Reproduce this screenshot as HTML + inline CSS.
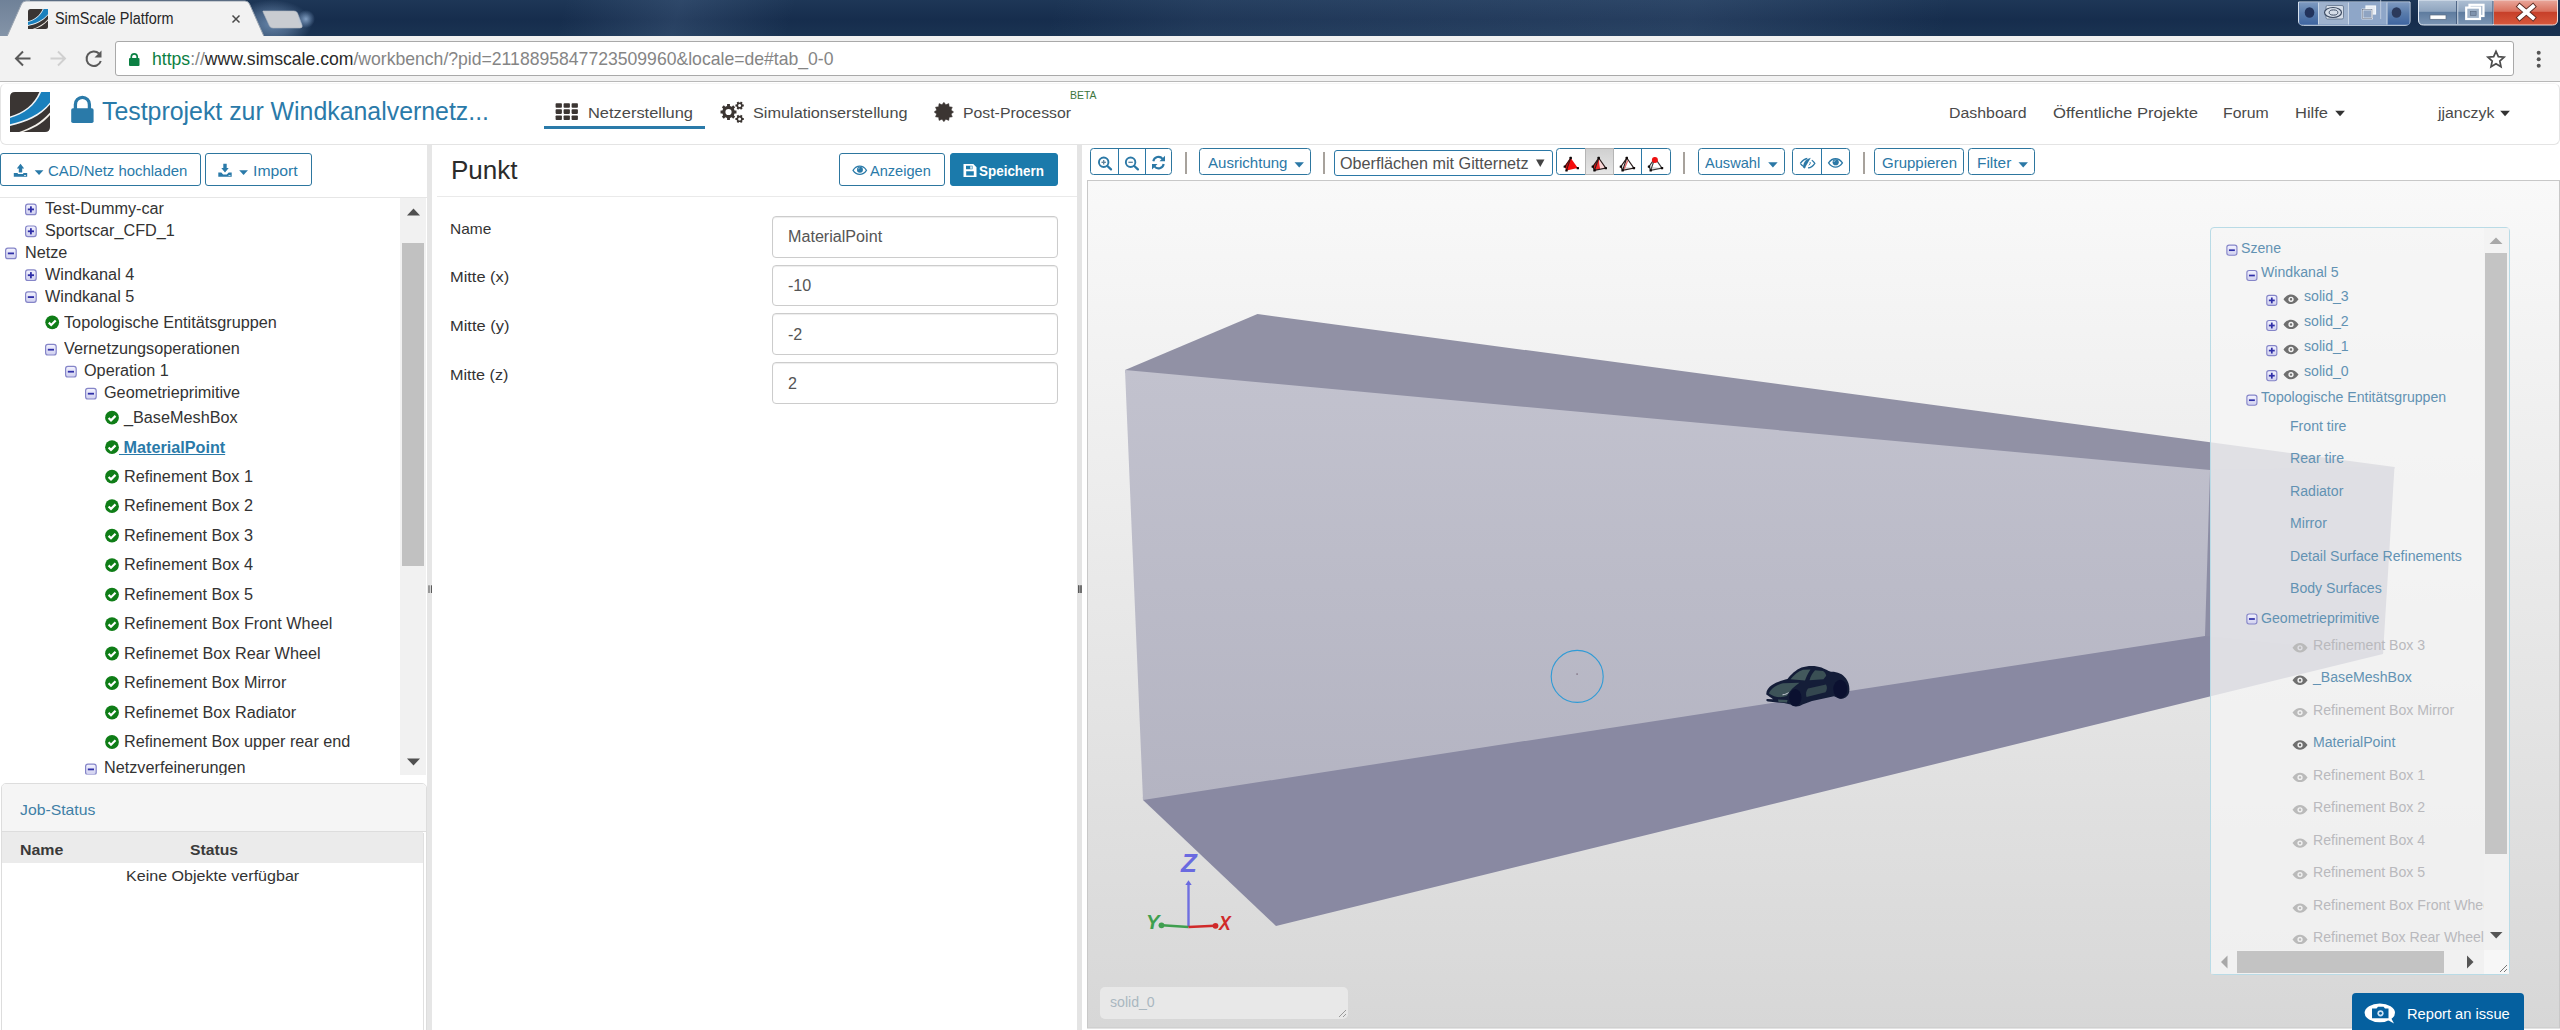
<!DOCTYPE html>
<html lang="de">
<head>
<meta charset="utf-8">
<title>SimScale Platform</title>
<style>
*{box-sizing:border-box;margin:0;padding:0}
html,body{width:2560px;height:1030px;overflow:hidden;background:#fff}
body{position:relative;font-family:"Liberation Sans","DejaVu Sans",sans-serif;color:#333}
.a{position:absolute}
.t{position:absolute;white-space:nowrap;line-height:1}
svg{position:absolute;overflow:visible}
/* ---------- browser chrome ---------- */
#titlebar{left:0;top:0;width:2560px;height:36px;background:
 linear-gradient(105deg,rgba(130,160,200,0) 0 22%,rgba(130,160,200,.17) 26.5%,rgba(130,160,200,0) 31% 41%,rgba(130,160,200,.09) 47%,rgba(130,160,200,.15) 66%,rgba(130,160,200,0) 76%),
 linear-gradient(#1e3757,#162d4d 55%,#1a3352)}
#toolbar{left:0;top:36px;width:2560px;height:46px;background:#f2f2f2;border-bottom:1px solid #b8b8b8}
#omni{left:115px;top:41px;width:2399px;height:35px;background:#fff;border:1px solid #a9a9a9;border-radius:3px}
/* ---------- app ---------- */
#app{left:0;top:83px;width:2560px;height:947px;background:#fff}
#hdr{left:0;top:82.5px;width:2559.5px;height:62.5px;background:#fff;border:1px solid #e4e4e4;border-top-color:#f6f6f6;border-radius:6px}
.btn{position:absolute;border:1px solid #2d769f;border-radius:3px;background:#fff;height:33px}
.vb{position:absolute;border:1px solid #2d769f;border-radius:3.5px;background:#fff;top:148px;height:27px}
.sep{position:absolute;top:152px;width:2px;height:22px;background:#a7a29c}
.inp{position:absolute;left:772px;width:286px;height:41.7px;border:1px solid #ccc;border-radius:4px;background:#fff;box-shadow:inset 0 1px 1px rgba(0,0,0,.075)}
</style>
</head>
<body>
<svg width="0" height="0" style="left:0;top:0"><defs>
<g id="logo"><path d="M5 0 H40 V35 Q40 40 35 40 H0 V5 Q0 0 5 0 Z" fill="#3a3533"/>
<path d="M40 0 L40 12.6 C30 24.6 16 30.6 0 34 L0 24.4 C14 20.6 24 12.6 29.4 0 Z" fill="#eef4f8"/>
<path d="M40 0 L40 10.6 C30 22.6 16 28.8 0 32.2 L0 26 C14 22.2 25 14 31.3 0 Z" fill="#1a80bd"/>
<path d="M40 23 C32 32.4 22 37.2 13.2 40 L9.2 40 C20 36.4 31 30.8 40 20.6 Z" fill="#f3f0ea"/>
</g></defs></svg>
<!-- ================= BROWSER CHROME ================= -->
<div id="titlebar" class="a"></div>
<div class="a" style="left:0;top:0;width:30px;height:36px;background:linear-gradient(#6f8198,#8494a8)"></div>
<svg style="left:0;top:0" width="2560" height="37" viewBox="0 0 2560 37">
 <defs><linearGradient id="gcl" x1="0" y1="0" x2="0" y2="1"><stop offset="0" stop-color="#e9a79b"/><stop offset=".45" stop-color="#d9715e"/><stop offset=".5" stop-color="#c7402a"/><stop offset="1" stop-color="#d8583c"/></linearGradient>
 <linearGradient id="gmm" x1="0" y1="0" x2="0" y2="1"><stop offset="0" stop-color="#aebfd3"/><stop offset=".45" stop-color="#8fa5bf"/><stop offset=".5" stop-color="#5f7c9f"/><stop offset="1" stop-color="#7b95b4"/></linearGradient>
 <radialGradient id="glow2"><stop offset="0" stop-color="#86a7cc" stop-opacity=".7"/><stop offset=".5" stop-color="#7f9fc4" stop-opacity=".45"/><stop offset="1" stop-color="#7f9fc4" stop-opacity="0"/></radialGradient>
 <radialGradient id="glow"><stop offset="0" stop-color="#a9c8ec" stop-opacity=".7"/><stop offset="1" stop-color="#9cc0ea" stop-opacity="0"/></radialGradient>
 <linearGradient id="gdk" x1="0" y1="0" x2="0" y2="1"><stop offset="0" stop-color="#7d99c0"/><stop offset=".5" stop-color="#587bab"/><stop offset="1" stop-color="#3f65a0"/></linearGradient>
 <linearGradient id="gov" x1="0" y1="0" x2="0" y2="1"><stop offset="0" stop-color="#8fa3c0"/><stop offset="1" stop-color="#6480a8"/></linearGradient></defs>
 <ellipse cx="272" cy="24" rx="40" ry="24" fill="url(#glow2)"/>
 <!-- active tab -->
 <path d="M7 36.5 L21.5 4 Q23 1 26 1 L245 1 Q248 1 249.5 4 L264 36.5 Z" fill="#f2f2f2" stroke="#9aa4b0" stroke-width="1"/>
 <rect x="0" y="36" width="2560" height="1" fill="#f2f2f2"/>
 <!-- new tab button -->
 <path d="M263 11 L294 11 Q296.5 11 297.5 13 L302 25 Q303 28 300 28 L273 28 Q270.5 28 269.5 26 L263.5 13 Q262.5 11 263 11Z" fill="#c9ccd1" stroke="#aeb5bf" stroke-width=".6"/>
 <circle cx="306" cy="19" r="9" fill="url(#glow)"/>
 <!-- favicon -->
 <g transform="translate(28,9) scale(.5)"><use href="#logo"/></g>
 <!-- tab close -->
 <path d="M232.5 15.5 L239.5 22.5 M239.5 15.5 L232.5 22.5" stroke="#4a4a4a" stroke-width="1.5" fill="none"/>
 <!-- overlay control group -->
 <path d="M2298.5 2 L2298.5 21 Q2298.5 25.3 2303.5 25.3 L2405 25.3 Q2410 25.3 2410 21 L2410 2Z" fill="#5d7fae" stroke="#d5e0ee" stroke-width="1"/>
 <rect x="2299.5" y="2.5" width="19" height="22" fill="url(#gdk)"/><rect x="2387.5" y="2.5" width="22" height="22" fill="url(#gdk)"/>
 <rect x="2319" y="2.5" width="29.5" height="22" fill="#9fb2cd"/><rect x="2349" y="2.5" width="38" height="22" fill="#8ea6c8"/>
 <path d="M2318.5 2.5V24.5M2348.5 2.5V24.5M2387 2.5V24.5" stroke="#c9d6e6" stroke-width="1"/>
 <path d="M2380.7 0V19" stroke="#c9d6e6" stroke-width="1" opacity=".8"/>
 <ellipse cx="2309.5" cy="12.5" rx="4.8" ry="5.3" fill="#22335c"/><ellipse cx="2396.5" cy="12.5" rx="4.8" ry="5.3" fill="#2b3a5c"/>
 <rect x="2326" y="5.5" width="17.5" height="13.5" rx="1.5" fill="#d5dde8" stroke="#5d6e88" stroke-width=".8"/><ellipse cx="2333" cy="12.5" rx="8.5" ry="5" fill="#d5dde8" stroke="#3d4b63" stroke-width="1.2"/><ellipse cx="2333.5" cy="12.5" rx="4.3" ry="2.6" fill="none" stroke="#3d4b63" stroke-width="1"/>
 <rect x="2366" y="6" width="9.5" height="8" fill="#e6ecf4" stroke="#f4f7fb" stroke-width="1.2"/><rect x="2362.5" y="9.5" width="9.5" height="9" fill="#8fa4c2" stroke="#fff" stroke-width="1.6"/><rect x="2362.5" y="9.5" width="9.5" height="9" fill="none" stroke="#44536d" stroke-width=".5"/>
 <!-- min / max / close -->
 <path d="M2418.5 0 L2418.5 20 Q2418.5 25 2423.5 25 L2493.5 25 L2493.5 0Z" fill="url(#gmm)" stroke="#e6edf5" stroke-width="1"/>
 <path d="M2493.5 0 L2493.5 25 L2552.5 25 Q2557.5 25 2557.5 20 L2557.5 0Z" fill="url(#gcl)" stroke="#f3dcd8" stroke-width="1"/>
 <path d="M2457.7 1V24" stroke="#e6edf5" stroke-width="1"/><path d="M2456.7 1V24M2493 1V24" stroke="#3d5578" stroke-width="1"/>
 <rect x="2430" y="15" width="16" height="4.3" fill="#fff" stroke="#5a6a80" stroke-width=".7"/>
 <rect x="2469.5" y="4.8" width="14" height="11.2" fill="#a9bace" stroke="#fff" stroke-width="2.2"/><rect x="2466.2" y="7.6" width="13.8" height="11.4" fill="#9fb2c8" stroke="#fff" stroke-width="2.2"/><rect x="2470.3" y="11.3" width="5.8" height="4.2" fill="#7f93ad" stroke="#5a6a80" stroke-width=".6"/>
 <path d="M2519.7 6.5 L2532.9 17.7 M2532.9 6.5 L2519.7 17.7" stroke="#5b2a22" stroke-width="5.6" stroke-linecap="square"/><path d="M2519.7 6.5 L2532.9 17.7 M2532.9 6.5 L2519.7 17.7" stroke="#fff" stroke-width="3.8" stroke-linecap="square"/>
</svg>

<div id="toolbar" class="a"></div>
<div id="omni" class="a"></div>
<svg style="left:0;top:36" width="2560" height="46" viewBox="0 36 2560 46">
 <!-- back -->
 <path d="M30.5 58.5 H16.5 M23 51.5 L16 58.5 L23 65.5" fill="none" stroke="#5a5a5a" stroke-width="2"/>
 <!-- forward -->
 <path d="M50.5 58.5 H64.5 M58 51.5 L65 58.5 L58 65.5" fill="none" stroke="#d0d0d0" stroke-width="1.9"/>
 <!-- reload -->
 <path d="M99 53.5 A7.3 7.3 0 1 0 100.8 61" fill="none" stroke="#5a5a5a" stroke-width="2"/><path d="M101.5 50.5 V57.5 H94.5 Z" fill="#5a5a5a"/>
 <!-- lock -->
 <rect x="129" y="58" width="10.5" height="8" rx="1" fill="#0b8043"/><path d="M131.3 58.5 V56.3 A3 3 0 0 1 137.2 56.3 V58.5" fill="none" stroke="#0b8043" stroke-width="1.7"/>
 <!-- star -->
 <path d="M2496 51.3 L2498.350 56.6 L2504.1 57.2 L2499.8 61.050 L2501 66.7 L2496 63.8 L2491 66.7 L2492.2 61.050 L2487.9 57.2 L2493.650 56.6 Z" fill="none" stroke="#4d4d4d" stroke-width="1.7" stroke-linejoin="miter"/>
 <!-- menu -->
 <circle cx="2538.7" cy="52.7" r="2" fill="#555"/><circle cx="2538.7" cy="59.2" r="2" fill="#555"/><circle cx="2538.7" cy="65.7" r="2" fill="#555"/>
</svg>


<svg width="0" height="0" style="left:0;top:0"><defs>
<linearGradient id="pmg" x1="0" y1="0" x2="0" y2="1"><stop offset="0" stop-color="#f4f4ff"/><stop offset="1" stop-color="#cfcfee"/></linearGradient>
<g id="minus"><rect x=".6" y=".6" width="10.6" height="10.6" rx="2.3" fill="url(#pmg)" stroke="#8585c8" stroke-width="1.2"/><rect x="2.8" y="5" width="6.2" height="1.8" fill="#3030a8"/></g>
<g id="plus"><rect x=".6" y=".6" width="10.6" height="10.6" rx="2.3" fill="url(#pmg)" stroke="#8585c8" stroke-width="1.2"/><rect x="2.8" y="5" width="6.2" height="1.8" fill="#3030a8"/><rect x="5" y="2.8" width="1.8" height="6.2" fill="#3030a8"/></g>
<g id="chk"><circle cx="7" cy="7" r="6.9" fill="#0f7d17"/><path d="M3.6 7.3 L6 9.7 L10.5 5.2" fill="none" stroke="#fff" stroke-width="2.2"/></g>
<g id="eye"><path d="M.7 5.2 C3 1.8 5.6 .8 8 .8 C10.4 .8 13 1.8 15.3 5.2 C13 8.6 10.4 9.6 8 9.6 C5.6 9.6 3 8.6 .7 5.2 Z" fill="none" stroke="currentColor" stroke-width="1.35"/><circle cx="8.2" cy="4.5" r="3.25" fill="currentColor"/><path d="M6.3 4.2 A2 2 0 0 1 8 2.6" fill="none" stroke="#fff" stroke-width=".7" opacity=".8"/></g>
<g id="eyef"><path fill-rule="evenodd" d="M0 5 C2.6 1.1 5.4 0 8 0 C10.6 0 13.4 1.1 16 5 C13.4 8.9 10.6 10 8 10 C5.4 10 2.6 8.9 0 5 Z M8 2.2 A2.8 2.8 0 1 0 8 7.8 A2.8 2.8 0 1 0 8 2.2 Z M8 3.7 A1.3 1.3 0 1 0 8 6.3 A1.3 1.3 0 1 0 8 3.7 Z"/></g>
<path id="caret" d="M0 0 H9 L4.5 5 Z"/>
</defs></svg>

<span class="t" style="left:55.0px;top:11.1px;font-size:16px;color:#262626;transform:scaleX(0.9005);transform-origin:0 0;">SimScale Platform</span>
<span class="t" style="left:152.0px;top:50.3px;font-size:18.5px;color:#858585;transform:scaleX(0.9511);transform-origin:0 0;"><span style="color:#0b8043">https</span>://<span style="color:#2a2a2a">www.simscale.com</span>/workbench/?pid=2118895847723509960&amp;locale=de#tab_0-0</span>
<div id="app" class="a"></div>
<div id="hdr" class="a"></div>
<span class="t" style="left:102.3px;top:99.4px;font-size:25px;color:#2a7aa9;transform:scaleX(0.9947);transform-origin:0 0;">Testprojekt zur Windkanalvernetz...</span>
<div class="btn" style="left:0;top:153px;width:201px"></div><div class="btn" style="left:205px;top:153px;width:107px"></div>
<span class="t" style="left:48.2px;top:164.1px;font-size:14.7px;color:#2a7aa9;transform:scaleX(1.0155);transform-origin:0 0;">CAD/Netz hochladen</span>
<span class="t" style="left:253.3px;top:164.1px;font-size:14.7px;color:#2a7aa9;transform:scaleX(1.0739);transform-origin:0 0;">Import</span>
<div class="a" style="left:0;top:197px;width:427px;height:1px;background:#e6e6e6"></div>
<div class="a" style="left:0;top:197px;width:400px;height:577.5px;overflow:hidden"><div class="a" style="left:0;top:-197px;width:400px;height:1030px"><span class="t" style="left:44.6px;top:200.9px;font-size:16px;color:#333;transform:scaleX(1.0140);transform-origin:0 0;">Test-Dummy-car</span><span class="t" style="left:44.6px;top:222.8px;font-size:16px;color:#333;transform:scaleX(1.0140);transform-origin:0 0;">Sportscar_CFD_1</span><span class="t" style="left:24.6px;top:244.6px;font-size:16px;color:#333;transform:scaleX(1.0140);transform-origin:0 0;">Netze</span><span class="t" style="left:44.8px;top:266.5px;font-size:16px;color:#333;transform:scaleX(1.0140);transform-origin:0 0;">Windkanal 4</span><span class="t" style="left:44.8px;top:288.5px;font-size:16px;color:#333;transform:scaleX(1.0140);transform-origin:0 0;">Windkanal 5</span><span class="t" style="left:64.0px;top:314.8px;font-size:16px;color:#333;transform:scaleX(1.0140);transform-origin:0 0;">Topologische Entitätsgruppen</span><span class="t" style="left:64.2px;top:340.6px;font-size:16px;color:#333;transform:scaleX(1.0140);transform-origin:0 0;">Vernetzungsoperationen</span><span class="t" style="left:84.4px;top:362.6px;font-size:16px;color:#333;transform:scaleX(1.0140);transform-origin:0 0;">Operation 1</span><span class="t" style="left:104.4px;top:384.6px;font-size:16px;color:#333;transform:scaleX(1.0140);transform-origin:0 0;">Geometrieprimitive</span><span class="t" style="left:124.0px;top:410.0px;font-size:16px;color:#333;transform:scaleX(1.0140);transform-origin:0 0;">_BaseMeshBox</span><span class="t" style="left:119.2px;top:439.5px;font-size:16px;color:#2a7aa9;font-weight:700;transform:scaleX(1.0120);transform-origin:0 0;text-decoration:underline;">&nbsp;MaterialPoint</span><span class="t" style="left:124.0px;top:468.9px;font-size:16px;color:#333;transform:scaleX(1.0140);transform-origin:0 0;">Refinement Box 1</span><span class="t" style="left:124.0px;top:498.4px;font-size:16px;color:#333;transform:scaleX(1.0140);transform-origin:0 0;">Refinement Box 2</span><span class="t" style="left:124.0px;top:527.9px;font-size:16px;color:#333;transform:scaleX(1.0140);transform-origin:0 0;">Refinement Box 3</span><span class="t" style="left:124.0px;top:557.3px;font-size:16px;color:#333;transform:scaleX(1.0140);transform-origin:0 0;">Refinement Box 4</span><span class="t" style="left:124.0px;top:586.8px;font-size:16px;color:#333;transform:scaleX(1.0140);transform-origin:0 0;">Refinement Box 5</span><span class="t" style="left:124.0px;top:616.3px;font-size:16px;color:#333;transform:scaleX(1.0140);transform-origin:0 0;">Refinement Box Front Wheel</span><span class="t" style="left:124.0px;top:645.8px;font-size:16px;color:#333;transform:scaleX(1.0140);transform-origin:0 0;">Refinemet Box Rear Wheel</span><span class="t" style="left:124.0px;top:675.2px;font-size:16px;color:#333;transform:scaleX(1.0140);transform-origin:0 0;">Refinement Box Mirror</span><span class="t" style="left:124.0px;top:704.7px;font-size:16px;color:#333;transform:scaleX(1.0140);transform-origin:0 0;">Refinemet Box Radiator</span><span class="t" style="left:124.0px;top:734.2px;font-size:16px;color:#333;transform:scaleX(1.0140);transform-origin:0 0;">Refinement Box upper rear end</span><span class="t" style="left:104.4px;top:760.4px;font-size:16px;color:#333;transform:scaleX(1.0140);transform-origin:0 0;">Netzverfeinerungen</span></div></div>
<div class="a" style="left:400px;top:198px;width:25.5px;height:577px;background:#f1f1f1"></div>
<div class="a" style="left:402px;top:243px;width:22px;height:323px;background:#c1c1c1"></div>
<div class="a" style="left:1px;top:783px;width:426px;height:260px;border:1px solid #ddd;border-radius:5px;background:#fff"></div>
<div class="a" style="left:2px;top:784px;width:424px;height:48px;background:#f5f5f5;border-bottom:1px solid #ddd;border-radius:4px 4px 0 0"></div>
<span class="t" style="left:20.2px;top:802.7px;font-size:14.6px;color:#3f7fa6;transform:scaleX(1.0793);transform-origin:0 0;">Job-Status</span>
<div class="a" style="left:2px;top:832px;width:421px;height:30.5px;background:#ebebeb"></div>
<div class="a" style="left:422.5px;top:833px;width:1px;height:197px;background:#e0e0e0"></div>
<span class="t" style="left:20.4px;top:841.8px;font-size:15px;color:#3a3a3a;font-weight:700;transform:scaleX(1.0622);transform-origin:0 0;">Name</span>
<span class="t" style="left:190.2px;top:841.8px;font-size:15px;color:#3a3a3a;font-weight:700;transform:scaleX(1.0470);transform-origin:0 0;">Status</span>
<span class="t" style="left:125.6px;top:868.9px;font-size:14.6px;color:#333;transform:scaleX(1.1004);transform-origin:0 0;">Keine Objekte verfügbar</span>
<div class="a" style="left:427px;top:145px;width:5px;height:885px;background:#e6e6e6"></div>
<svg style="left:0;top:0" width="440" height="1030" viewBox="0 0 440 1030"><defs><clipPath id="tclip"><rect x="0" y="84" width="440" height="690.5"/></clipPath></defs><g clip-path="url(#tclip)"><use href="#logo" transform="translate(10,92)"/><rect x="71.2" y="108.3" width="22.4" height="14.8" rx="1.8" fill="#2a7aa9"/><path d="M75.4 109.5 V104.4 A7 7 0 0 1 89.4 104.4 V109.5" fill="none" stroke="#2a7aa9" stroke-width="3.3"/><g fill="#2a7aa9"><path d="M20.5 163.8 L24.2 168.4 H22.2 V172.4 H18.8 V168.4 H16.8 Z"/><path fill-rule="evenodd" d="M13.8 173 H17.8 V174 H23.2 V173 H27.2 V176.8 H13.8 Z M24 175 H26 V175.8 H24 Z"/></g><use href="#caret" transform="translate(34.7,170.2) scale(0.97)" fill="#2a7aa9" color="#2a7aa9"/><g fill="#2a7aa9"><path d="M223.3 163.8 H226.7 V168 H228.7 L225 172.6 L221.3 168 H223.3 Z"/><path fill-rule="evenodd" d="M218.3 172.6 H221.3 L223.2 174.5 H226.8 L228.7 172.6 H231.7 V176.8 H218.3 Z M228.5 175 H230.5 V175.8 H228.5 Z"/></g><use href="#caret" transform="translate(239.2,170.2) scale(0.97)" fill="#2a7aa9" color="#2a7aa9"/><use href="#plus" transform="translate(25,203.5)"/><use href="#plus" transform="translate(25,225.4)"/><use href="#minus" transform="translate(5,247.5)"/><use href="#plus" transform="translate(25,269.3)"/><use href="#minus" transform="translate(25,291.2)"/><use href="#chk" transform="translate(45.2,315.3)"/><use href="#minus" transform="translate(45,343.8)"/><use href="#minus" transform="translate(65,365.8)"/><use href="#minus" transform="translate(85,387.8)"/><use href="#chk" transform="translate(105,410.7)"/><use href="#chk" transform="translate(105,440.2)"/><use href="#chk" transform="translate(105,469.7)"/><use href="#chk" transform="translate(105,499.2)"/><use href="#chk" transform="translate(105,528.6)"/><use href="#chk" transform="translate(105,558.1)"/><use href="#chk" transform="translate(105,587.6)"/><use href="#chk" transform="translate(105,617.1)"/><use href="#chk" transform="translate(105,646.5)"/><use href="#chk" transform="translate(105,676)"/><use href="#chk" transform="translate(105,705.5)"/><use href="#chk" transform="translate(105,735)"/><use href="#minus" transform="translate(85,763.5)"/><path d="M407 215.5 L413.5 208.5 L420 215.5 Z" fill="#505050"/><path d="M407 758.5 L413.5 765.5 L420 758.5 Z" fill="#505050"/><path d="M429 585.3 V593 M431.4 585.3 V593" stroke="#4a4a4a" stroke-width="1"/></g></svg>
<span class="t" style="left:587.5px;top:104.9px;font-size:15.3px;color:#4a4a4a;transform:scaleX(1.0738);transform-origin:0 0;">Netzerstellung</span>
<div class="a" style="left:544px;top:125.5px;width:161px;height:3px;background:#2a7aa9"></div>
<span class="t" style="left:753.0px;top:104.9px;font-size:15.3px;color:#4a4a4a;transform:scaleX(1.0625);transform-origin:0 0;">Simulationserstellung</span>
<span class="t" style="left:963.0px;top:104.9px;font-size:15.3px;color:#4a4a4a;transform:scaleX(1.0329);transform-origin:0 0;">Post-Processor</span>
<span class="t" style="left:1069.5px;top:89.8px;font-size:10.5px;color:#3c763d;transform:scaleX(0.9941);transform-origin:0 0;">BETA</span>
<span class="t" style="left:1949.0px;top:104.9px;font-size:15.3px;color:#4a4a4a;transform:scaleX(1.0382);transform-origin:0 0;">Dashboard</span>
<span class="t" style="left:2052.5px;top:104.9px;font-size:15.3px;color:#4a4a4a;transform:scaleX(1.0884);transform-origin:0 0;">Öffentliche Projekte</span>
<span class="t" style="left:2223.0px;top:104.9px;font-size:15.3px;color:#4a4a4a;transform:scaleX(1.0339);transform-origin:0 0;">Forum</span>
<span class="t" style="left:2295.3px;top:104.9px;font-size:15.3px;color:#4a4a4a;transform:scaleX(1.0781);transform-origin:0 0;">Hilfe</span>
<span class="t" style="left:2437.7px;top:104.9px;font-size:15.3px;color:#4a4a4a;transform:scaleX(1.0348);transform-origin:0 0;">jjanczyk</span>
<span class="t" style="left:450.6px;top:157.0px;font-size:26.5px;color:#2b2b2b;transform:scaleX(0.9828);transform-origin:0 0;">Punkt</span>
<div class="btn" style="left:839px;top:153px;width:106px"></div>
<div class="btn" style="left:950px;top:153px;width:108px;background:#1b7aab;border-color:#1b7aab"></div>
<span class="t" style="left:870.2px;top:163.5px;font-size:14.7px;color:#2a7aa9;transform:scaleX(0.9927);transform-origin:0 0;">Anzeigen</span>
<span class="t" style="left:978.8px;top:163.5px;font-size:14.7px;color:#fff;font-weight:700;transform:scaleX(0.9153);transform-origin:0 0;">Speichern</span>
<div class="a" style="left:437px;top:196px;width:640px;height:1px;background:#eaeaea"></div>
<div class="inp" style="top:216px"></div>
<span class="t" style="left:788.2px;top:229.1px;font-size:16px;color:#555;transform:scaleX(1.0080);transform-origin:0 0;">MaterialPoint</span>
<span class="t" style="left:450.0px;top:220.5px;font-size:15px;color:#333;transform:scaleX(1.0321);transform-origin:0 0;">Name</span>
<div class="inp" style="top:264.5px"></div>
<span class="t" style="left:788.2px;top:278.4px;font-size:16px;color:#555;transform:scaleX(1.0080);transform-origin:0 0;">-10</span>
<span class="t" style="left:450.0px;top:268.6px;font-size:15px;color:#333;transform:scaleX(1.0928);transform-origin:0 0;">Mitte (x)</span>
<div class="inp" style="top:313.3px"></div>
<span class="t" style="left:788.2px;top:327.4px;font-size:16px;color:#555;transform:scaleX(1.0080);transform-origin:0 0;">-2</span>
<span class="t" style="left:450.0px;top:317.5px;font-size:15px;color:#333;transform:scaleX(1.0965);transform-origin:0 0;">Mitte (y)</span>
<div class="inp" style="top:362.2px"></div>
<span class="t" style="left:788.2px;top:376.2px;font-size:16px;color:#555;transform:scaleX(1.0080);transform-origin:0 0;">2</span>
<span class="t" style="left:450.0px;top:366.5px;font-size:15px;color:#333;transform:scaleX(1.0781);transform-origin:0 0;">Mitte (z)</span>
<div class="a" style="left:1077px;top:145px;width:5px;height:885px;background:#e4e4e4"></div>
<svg style="left:0;top:0" width="2560" height="420" viewBox="0 0 2560 420"><rect x="555.6" y="103.2" width="6.3" height="4.6" rx=".8" fill="#3b3532"/><rect x="563.6" y="103.2" width="6.3" height="4.6" rx=".8" fill="#3b3532"/><rect x="571.6" y="103.2" width="6.3" height="4.6" rx=".8" fill="#3b3532"/><rect x="555.6" y="109.3" width="6.3" height="4.6" rx=".8" fill="#3b3532"/><rect x="563.6" y="109.3" width="6.3" height="4.6" rx=".8" fill="#3b3532"/><rect x="571.6" y="109.3" width="6.3" height="4.6" rx=".8" fill="#3b3532"/><rect x="555.6" y="115.4" width="6.3" height="4.6" rx=".8" fill="#3b3532"/><rect x="563.6" y="115.4" width="6.3" height="4.6" rx=".8" fill="#3b3532"/><rect x="571.6" y="115.4" width="6.3" height="4.6" rx=".8" fill="#3b3532"/><path fill-rule="evenodd" fill="#3b3532" d="M736.48 110.61 L736.48 113.39 L734.61 113.47 L733.85 115.28 L735.13 116.66 L733.16 118.63 L731.78 117.35 L729.97 118.11 L729.89 119.98 L727.11 119.98 L727.03 118.11 L725.22 117.35 L723.84 118.63 L721.87 116.66 L723.15 115.28 L722.39 113.47 L720.52 113.39 L720.52 110.61 L722.39 110.53 L723.15 108.72 L721.87 107.34 L723.84 105.37 L725.22 106.65 L727.03 105.89 L727.11 104.02 L729.89 104.02 L729.97 105.89 L731.78 106.65 L733.16 105.37 L735.13 107.34 L733.85 108.72 L734.61 110.53 Z M725.40 112.00 A3.10 3.10 0 1 0 731.60 112.00 A3.10 3.10 0 1 0 725.40 112.00 Z"/><path fill-rule="evenodd" fill="#3b3532" d="M743.79 104.62 L743.79 106.58 L742.70 106.61 L742.02 107.78 L742.54 108.73 L740.84 109.72 L740.28 108.79 L738.92 108.79 L738.36 109.72 L736.66 108.73 L737.18 107.78 L736.50 106.61 L735.41 106.58 L735.41 104.62 L736.50 104.59 L737.18 103.42 L736.66 102.47 L738.36 101.48 L738.92 102.41 L740.28 102.41 L740.84 101.48 L742.54 102.47 L742.02 103.42 L742.70 104.59 Z M738.10 105.60 A1.50 1.50 0 1 0 741.10 105.60 A1.50 1.50 0 1 0 738.10 105.60 Z"/><path fill-rule="evenodd" fill="#3b3532" d="M743.79 117.92 L743.79 119.88 L742.70 119.91 L742.02 121.08 L742.54 122.03 L740.84 123.02 L740.28 122.09 L738.92 122.09 L738.36 123.02 L736.66 122.03 L737.18 121.08 L736.50 119.91 L735.41 119.88 L735.41 117.92 L736.50 117.89 L737.18 116.72 L736.66 115.77 L738.36 114.78 L738.92 115.71 L740.28 115.71 L740.84 114.78 L742.54 115.77 L742.02 116.72 L742.70 117.89 Z M738.10 118.90 A1.50 1.50 0 1 0 741.10 118.90 A1.50 1.50 0 1 0 738.10 118.90 Z"/><path fill="#3b3532" stroke="#3b3532" stroke-width=".5" stroke-linejoin="round" d="M953.60 112.00 L951.14 113.94 L952.30 116.85 L949.20 117.30 L948.75 120.40 L945.84 119.24 L943.90 121.70 L941.96 119.24 L939.05 120.40 L938.60 117.30 L935.50 116.85 L936.66 113.94 L934.20 112.00 L936.66 110.06 L935.50 107.15 L938.60 106.70 L939.05 103.60 L941.96 104.76 L943.90 102.30 L945.84 104.76 L948.75 103.60 L949.20 106.70 L952.30 107.15 L951.14 110.06 Z"/><use href="#caret" transform="translate(2335.2,110.8) scale(1.08)" fill="#333" color="#333"/><use href="#caret" transform="translate(2500.2,110.8) scale(1.08)" fill="#333" color="#333"/><use href="#eye" transform="translate(852.4,165.5) scale(0.92)" fill="#2a7aa9" color="#2a7aa9"/><path fill-rule="evenodd" fill="#fff" d="M963.5 164 H973.3 L976.5 167.2 V177 H963.5 Z M966 165.7 V169.3 H972.5 V165.7 Z M966.2 171.2 V175.5 H973.8 V171.2 Z M970.3 166.3 H971.8 V168.7 H970.3 Z"/><path d="M1078.8 585.3 V593 M1081 585.3 V593" stroke="#4a4a4a" stroke-width="1"/></svg>
<svg style="left:0;top:0" width="2560" height="1030" viewBox="0 0 2560 1030"><path d="M1078.8 585.3 V593 M1081 585.3 V593" stroke="#4a4a4a" stroke-width="1"/></svg>
<div class="vb" style="left:1090px;width:82px;"></div>
<div class="sep" style="left:1184.8px"></div>
<div class="sep" style="left:1322.8px"></div>
<div class="sep" style="left:1682.7px"></div>
<div class="sep" style="left:1862.7px"></div>
<div class="vb" style="left:1199px;width:111.5px;"></div>
<span class="t" style="left:1207.5px;top:156.3px;font-size:14.4px;color:#2b78a6;transform:scaleX(1.0461);transform-origin:0 0;">Ausrichtung</span>
<div class="a" style="left:1334px;top:150px;width:218.5px;height:26.3px;border:1px solid #2b78a6;border-radius:3px;background:#fff"></div>
<span class="t" style="left:1340.3px;top:155.1px;font-size:17px;color:#505050;transform:scaleX(0.9510);transform-origin:0 0;">Oberflächen mit Gitternetz</span>
<div class="vb" style="left:1556px;width:114.5px;"></div>
<div class="a" style="left:1585px;top:148px;width:29px;height:27px;background:linear-gradient(#d0d0d0,#e6e6e6);border:1px solid #b5b5b5"></div>
<div class="vb" style="left:1697.5px;width:87px;"></div>
<span class="t" style="left:1705.4px;top:156.3px;font-size:14.4px;color:#2b78a6;transform:scaleX(1.0146);transform-origin:0 0;">Auswahl</span>
<div class="vb" style="left:1792px;width:57.7px;"></div>
<div class="vb" style="left:1874px;width:90px;"></div>
<span class="t" style="left:1881.5px;top:156.3px;font-size:14.4px;color:#2b78a6;transform:scaleX(1.0417);transform-origin:0 0;">Gruppieren</span>
<div class="vb" style="left:1968px;width:66.5px;"></div>
<span class="t" style="left:1976.5px;top:156.3px;font-size:14.4px;color:#2b78a6;transform:scaleX(1.0724);transform-origin:0 0;">Filter</span>
<svg style="left:0;top:0" width="2560" height="1030" viewBox="0 0 2560 1030"><defs><linearGradient id="cbg" x1="0" y1="0" x2="0" y2="1"><stop offset="0" stop-color="#f9f9f9"/><stop offset="1" stop-color="#d7d7d7"/></linearGradient><linearGradient id="ff" x1="0" y1="0" x2="0" y2="1"><stop offset="0" stop-color="#c2c2ce"/><stop offset="1" stop-color="#b4b4c2"/></linearGradient></defs><rect x="1087.5" y="180.5" width="1472" height="847.5" fill="url(#cbg)" stroke="#c8c8c8" stroke-width="1"/><polygon points="1125,370 1257.5,314 2394.5,467 2394.3,469 2210,473 1125.2,373" fill="#9191a5"/><polygon points="1143,800 1142.9,797 2205,633 2383.2,652 2383,654 1276,926" fill="#8989a2"/><polygon points="2210,470 2394.5,467 2383,654 2205,636 2202,636 2207,470" fill="#8d8da4"/><polygon points="1125,370 2210,470 2205,636 1143,800" fill="url(#ff)"/><circle cx="1577.2" cy="676.4" r="26" fill="none" stroke="#2f9bd6" stroke-width="1.1"/><rect x="1576.3" y="673.3" width="1.6" height="1.6" fill="#8a7f8f"/><g><path d="M1766.3 694.5 C1766 690.5 1768.5 687.5 1772 685 C1777 681.8 1783 680.3 1787.5 679 C1791 674.5 1796 669.8 1801.5 667.6 C1807 665.6 1816 665.4 1821.5 667.6 C1825 669 1828 671 1831 671.8 C1837 671.6 1842.5 673.8 1846 678.5 C1849.3 683 1850.3 689.5 1848.6 694 C1847 697.5 1843.5 699.3 1839.5 698.8 L1834 696.3 L1812 701 L1802.5 704.5 C1799 707 1793.5 707 1790.5 704.5 L1784 703 L1768 701.5 C1766 701 1765.8 699.5 1767 699 L1773 699.2 C1771 697.5 1769 696.5 1766.3 694.5 Z" fill="#141d38"/><path d="M1790.5 679.3 C1794 675 1798 671.3 1803 669.8 L1810.5 669.4 C1808 673 1806.3 676.8 1805 680.5 Z" fill="#43595c"/><path d="M1809.5 680.3 C1810.5 676.5 1812.5 672.8 1815 670.2 L1823 671 C1825 672.3 1826 674 1826.2 675.8 L1823.5 679.3 Z" fill="#3a4f54"/><path d="M1769 693.5 C1770.5 689 1775.5 685.3 1783 683.3 L1799.5 682.8 C1794 686.5 1789.5 691 1787 696 C1781 698 1774 697.5 1769 693.5 Z" fill="#3d5358"/><path d="M1808 688.5 L1826 684.5 C1827.5 687 1827 690 1825.5 692.3 L1806.5 697 C1805.5 694 1806 691 1808 688.5 Z" fill="#34474f"/><path d="M1778 699.5 L1787.5 700 L1787 702.6 L1778.5 702 Z" fill="#3d5358"/><ellipse cx="1795.3" cy="697.6" rx="6.2" ry="8.6" fill="#0b1030"/><ellipse cx="1840.3" cy="689" rx="7" ry="9.3" fill="#0b1030"/><path d="M1782.5 694.8 C1785 694.6 1787 693.8 1788.5 692.6" stroke="#c9ccd8" stroke-width="1" fill="none"/></g><path d="M1188.5 927 V884" stroke="#6f6fe0" stroke-width="2.4"/><path d="M1185.3 885 L1188.5 880.3 L1191.7 885 Z" fill="#6a6ae0"/><path d="M1188.5 927 L1162 925.3" stroke="#3f9f4f" stroke-width="2.4"/><circle cx="1161.5" cy="925.3" r="2.9" fill="#3f9f4f"/><path d="M1188.5 927 L1215 925.8" stroke="#d02a2a" stroke-width="2.4"/><circle cx="1215.5" cy="925.8" r="2.9" fill="#d02a2a"/></svg>
<span class="t" style="left:1180.7px;top:850.1px;font-size:26px;color:#6a6ae0;font-weight:700;transform:scaleX(0.9943);transform-origin:0 0;font-style:italic;">Z</span>
<span class="t" style="left:1145.7px;top:911.7px;font-size:20.5px;color:#3f9f4f;font-weight:700;transform:scaleX(0.9863);transform-origin:0 0;font-style:italic;">Y</span>
<span class="t" style="left:1219.2px;top:912.9px;font-size:20.5px;color:#d02a2a;font-weight:700;transform:scaleX(0.8621);transform-origin:0 0;font-style:italic;">X</span>
<div class="a" style="left:1100px;top:987px;width:248px;height:32px;background:rgba(236,236,236,.82);border-radius:5px"></div>
<span class="t" style="left:1109.8px;top:995.1px;font-size:14px;color:#aab7c0;transform:scaleX(1.0080);transform-origin:0 0;">solid_0</span>
<svg style="left:0;top:0" width="2560" height="1030" viewBox="0 0 2560 1030"><path d="M1118.5 149 V174.5 M1145.5 149 V174.5" stroke="#2b78a6" stroke-width="1"/><circle cx="1103.7" cy="162.3" r="4.75" fill="none" stroke="#2b78a6" stroke-width="1.9"/><path d="M1107.4 166 L1111 169.4" stroke="#2b78a6" stroke-width="2.3" stroke-linecap="round"/><path d="M1101.5 162.3 H1105.9" stroke="#5b7f99" stroke-width="1.3"/><path d="M1103.7 160.1 V164.5" stroke="#5b7f99" stroke-width="1.3"/><circle cx="1130.6" cy="162.3" r="4.75" fill="none" stroke="#2b78a6" stroke-width="1.9"/><path d="M1134.3 166 L1137.9 169.4" stroke="#2b78a6" stroke-width="2.3" stroke-linecap="round"/><path d="M1128.4 162.3 H1132.8" stroke="#5b7f99" stroke-width="1.3"/><g fill="none" stroke="#2b78a6" stroke-width="2.1"><path d="M1153.3 161.2 A5.3 5.3 0 0 1 1162.6 158.8"/><path d="M1163.7 164 A5.3 5.3 0 0 1 1154.4 166.4"/></g><path d="M1165 155.8 V161.3 H1159.5 Z M1152 169.4 V163.9 H1157.5 Z" fill="#2b78a6"/><use href="#caret" transform="translate(1294.5,162.3) scale(1.05)" fill="#2b78a6" color="#2b78a6"/><path d="M1536 159.5 H1544.5 L1540.250 167 Z" fill="#444"/><path d="M1641.5 149 V174.5" stroke="#2b78a6" stroke-width="1"/><polygon points="1570.7,158.0 1577.8,168.1 1566.5,170.4 1564.8,166.6" fill="#f50d0d"/><polygon points="1570.7,158.0 1566.5,170.4 1564.8,166.6" fill="#c70f0f"/><path d="M1570.7,158.0 L1564.8,166.6 M1570.7,158.0 L1566.5,170.4" fill="none" stroke="#4a1212" stroke-width="1.1"/><rect x="1563.6" y="165.4" width="2.4" height="2.4" rx=".5" fill="#0e0808"/><rect x="1576.6" y="166.9" width="2.4" height="2.4" rx=".5" fill="#0e0808"/><rect x="1565.3" y="169.2" width="2.4" height="2.4" rx=".5" fill="#0e0808"/><rect x="1569.5" y="156.8" width="2.4" height="2.4" rx=".5" fill="#0e0808"/><polygon points="1598.7,158.0 1594.5,170.4 1592.8,166.6" fill="#d81414"/><polygon points="1598.7,158.0 1600.2,169.2 1594.5,170.4" fill="#ee2a2a"/><polygon points="1598.7,158.0 1605.8,168.1 1600.2,169.2" fill="#f9d6d6"/><path d="M1598.7,158.0 L1592.8,166.6 L1594.5,170.4 L1605.8,168.1 Z M1598.7,158.0 L1594.5,170.4" fill="none" stroke="#2a1c1c" stroke-width="1.15"/><rect x="1591.6" y="165.4" width="2.4" height="2.4" rx=".5" fill="#0e0808"/><rect x="1604.6" y="166.9" width="2.4" height="2.4" rx=".5" fill="#0e0808"/><rect x="1593.3" y="169.2" width="2.4" height="2.4" rx=".5" fill="#0e0808"/><rect x="1597.5" y="156.8" width="2.4" height="2.4" rx=".5" fill="#0e0808"/><polygon points="1620.9,166.6 1622.6,170.4 1633.9,168.1" fill="#d9d9d9"/><path d="M1627.7 160.5 L1624.2 168.9" stroke="#e86a6a" stroke-width="1.3"/><path d="M1626.8,158.0 L1620.9,166.6 L1622.6,170.4 L1633.9,168.1 Z M1626.8,158.0 L1622.6,170.4" fill="none" stroke="#2a1c1c" stroke-width="1.15"/><rect x="1619.7" y="165.4" width="2.4" height="2.4" rx=".5" fill="#0e0808"/><rect x="1632.7" y="166.9" width="2.4" height="2.4" rx=".5" fill="#0e0808"/><rect x="1621.4" y="169.2" width="2.4" height="2.4" rx=".5" fill="#0e0808"/><rect x="1625.6" y="156.8" width="2.4" height="2.4" rx=".5" fill="#0e0808"/><polygon points="1649.0,166.6 1650.7,170.4 1662.0,168.1" fill="#d9d9d9"/><path d="M1654.9,158.0 L1649.0,166.6 L1650.7,170.4 L1662.0,168.1 Z M1654.9,158.0 L1650.7,170.4" fill="none" stroke="#3c3c3c" stroke-width="1.15"/><circle cx="1654.9" cy="160.0" r="3" fill="#ee1111"/><rect x="1647.8" y="165.4" width="2.4" height="2.4" rx=".5" fill="#0e0808"/><rect x="1660.8" y="166.9" width="2.4" height="2.4" rx=".5" fill="#0e0808"/><rect x="1649.5" y="169.2" width="2.4" height="2.4" rx=".5" fill="#0e0808"/><use href="#caret" transform="translate(1768.2,162.3) scale(1.05)" fill="#2b78a6" color="#2b78a6"/><path d="M1821.5 149 V174.5" stroke="#2b78a6" stroke-width="1"/><path d="M1800.3 163.3 C1803 159.8 1805 158.7 1807.3 158.5 M1811.8 160.2 C1813 161 1814 162 1814.8 163.3 C1812.8 166.5 1810.5 167.7 1808 167.9 M1805.3 167.5 C1803.5 166.8 1801.8 165.5 1800.3 163.3" fill="none" stroke="#2b78a6" stroke-width="1.3"/><path d="M1810.8 157.7 L1804.4 168.7 L1803.3 167.4 C1802.8 163 1805.5 159.2 1810.8 157.7 Z" fill="#2b78a6"/><path d="M1810.2 162 A3 3 0 0 1 1808.8 165.3" fill="none" stroke="#2b78a6" stroke-width=".9"/><use href="#eye" transform="translate(1827.9,158) scale(0.95)" fill="#2b78a6" color="#2b78a6"/><use href="#caret" transform="translate(2018.5,162.3) scale(1.05)" fill="#2b78a6" color="#2b78a6"/><path d="M1339 1017 L1346 1010 M1343 1017 L1346 1014" stroke="#999" stroke-width="1"/></svg>
<div class="a" style="left:2210px;top:226.5px;width:299.5px;height:748.5px;background:rgba(245,245,245,.79);border:1px solid #b9dbe6;border-radius:4px"></div>
<div class="a" style="left:2484px;top:227.5px;width:24.5px;height:722px;background:rgba(241,241,241,.75)"></div>
<div class="a" style="left:2485px;top:253px;width:22px;height:601px;background:#c4c4c4"></div>
<div class="a" style="left:2211px;top:950px;width:273px;height:24px;background:rgba(241,241,241,.75)"></div>
<div class="a" style="left:2237px;top:951px;width:207px;height:22px;background:#c3c3c3"></div>
<div class="a" style="left:2484px;top:950px;width:24.5px;height:24px;background:#f7f7f7"></div>
<div class="a" style="left:2211px;top:227.5px;width:272.5px;height:722.5px;overflow:hidden"><div class="a" style="left:-2211px;top:-227.5px;width:2560px;height:1030px"><span class="t" style="left:2240.8px;top:241.4px;font-size:14px;color:#6292b3;transform:scaleX(1.0080);transform-origin:0 0;">Szene</span><span class="t" style="left:2260.8px;top:264.5px;font-size:14px;color:#6292b3;transform:scaleX(1.0080);transform-origin:0 0;">Windkanal 5</span><span class="t" style="left:2304.0px;top:289.1px;font-size:14px;color:#6292b3;transform:scaleX(1.0080);transform-origin:0 0;">solid_3</span><span class="t" style="left:2304.0px;top:314.2px;font-size:14px;color:#6292b3;transform:scaleX(1.0080);transform-origin:0 0;">solid_2</span><span class="t" style="left:2304.0px;top:339.3px;font-size:14px;color:#6292b3;transform:scaleX(1.0080);transform-origin:0 0;">solid_1</span><span class="t" style="left:2304.0px;top:364.4px;font-size:14px;color:#6292b3;transform:scaleX(1.0080);transform-origin:0 0;">solid_0</span><span class="t" style="left:2261.0px;top:390.0px;font-size:14px;color:#6292b3;transform:scaleX(1.0080);transform-origin:0 0;">Topologische Entitätsgruppen</span><span class="t" style="left:2290.0px;top:418.9px;font-size:14px;color:#6292b3;transform:scaleX(1.0080);transform-origin:0 0;">Front tire</span><span class="t" style="left:2290.0px;top:450.9px;font-size:14px;color:#6292b3;transform:scaleX(1.0080);transform-origin:0 0;">Rear tire</span><span class="t" style="left:2290.0px;top:483.8px;font-size:14px;color:#6292b3;transform:scaleX(1.0080);transform-origin:0 0;">Radiator</span><span class="t" style="left:2290.0px;top:516.0px;font-size:14px;color:#6292b3;transform:scaleX(1.0080);transform-origin:0 0;">Mirror</span><span class="t" style="left:2290.0px;top:548.8px;font-size:14px;color:#6292b3;transform:scaleX(1.0080);transform-origin:0 0;">Detail Surface Refinements</span><span class="t" style="left:2290.0px;top:581.1px;font-size:14px;color:#6292b3;transform:scaleX(1.0080);transform-origin:0 0;">Body Surfaces</span><span class="t" style="left:2261.2px;top:610.9px;font-size:14px;color:#6292b3;transform:scaleX(1.0080);transform-origin:0 0;">Geometrieprimitive</span><span class="t" style="left:2312.8px;top:637.9px;font-size:14px;color:#b9b9bd;transform:scaleX(1.0080);transform-origin:0 0;">Refinement Box 3</span><span class="t" style="left:2312.8px;top:670.3px;font-size:14px;color:#6292b3;transform:scaleX(1.0080);transform-origin:0 0;">_BaseMeshBox</span><span class="t" style="left:2312.8px;top:702.7px;font-size:14px;color:#b9b9bd;transform:scaleX(1.0080);transform-origin:0 0;">Refinement Box Mirror</span><span class="t" style="left:2312.8px;top:735.1px;font-size:14px;color:#6292b3;transform:scaleX(1.0080);transform-origin:0 0;">MaterialPoint</span><span class="t" style="left:2312.8px;top:767.5px;font-size:14px;color:#b9b9bd;transform:scaleX(1.0080);transform-origin:0 0;">Refinement Box 1</span><span class="t" style="left:2312.8px;top:799.9px;font-size:14px;color:#b9b9bd;transform:scaleX(1.0080);transform-origin:0 0;">Refinement Box 2</span><span class="t" style="left:2312.8px;top:833.2px;font-size:14px;color:#b9b9bd;transform:scaleX(1.0080);transform-origin:0 0;">Refinement Box 4</span><span class="t" style="left:2312.8px;top:864.7px;font-size:14px;color:#b9b9bd;transform:scaleX(1.0080);transform-origin:0 0;">Refinement Box 5</span><span class="t" style="left:2312.8px;top:898.2px;font-size:14px;color:#b9b9bd;transform:scaleX(1.0080);transform-origin:0 0;">Refinement Box Front Wheel</span><span class="t" style="left:2312.8px;top:929.5px;font-size:14px;color:#b9b9bd;transform:scaleX(1.0080);transform-origin:0 0;">Refinemet Box Rear Wheel</span></div></div>
<div class="a" style="left:2352px;top:993px;width:171.5px;height:40px;background:#05609f;border-radius:4px"></div>
<span class="t" style="left:2407.3px;top:1005.8px;font-size:15.5px;color:#fff;transform:scaleX(0.9460);transform-origin:0 0;">Report an issue</span>
<svg style="left:0;top:0" width="2560" height="1030" viewBox="0 0 2560 1030"><defs><clipPath id="sclip"><rect x="2205" y="227" width="360" height="810"/></clipPath></defs><g clip-path="url(#sclip)"><path d="M2489.5 244 L2496 237.5 L2502.5 244 Z" fill="#a8a8a8"/><path d="M2490 932 L2496.2 938.5 L2502.5 932 Z" fill="#555"/><path d="M2227.5 955.5 L2221 962 L2227.5 968.5 Z" fill="#a8a8a8"/><path d="M2467 955.5 L2473.5 962 L2467 968.5 Z" fill="#555"/><path d="M2500 972 L2507 965 M2504 972 L2507 969" stroke="#777" stroke-width="1"/><use href="#minus" transform="translate(2226.3,244.6) scale(0.95)"/><use href="#minus" transform="translate(2246.3,269.9) scale(0.95)"/><use href="#plus" transform="translate(2266.2,294.8) scale(0.95)"/><use href="#eyef" transform="translate(2283.5,294.6) scale(0.94)" fill="#6f6f6f" color="#6f6f6f"/><use href="#plus" transform="translate(2266.2,319.9) scale(0.95)"/><use href="#eyef" transform="translate(2283.5,319.7) scale(0.94)" fill="#6f6f6f" color="#6f6f6f"/><use href="#plus" transform="translate(2266.2,345) scale(0.95)"/><use href="#eyef" transform="translate(2283.5,344.8) scale(0.94)" fill="#6f6f6f" color="#6f6f6f"/><use href="#plus" transform="translate(2266.2,370.1) scale(0.95)"/><use href="#eyef" transform="translate(2283.5,369.9) scale(0.94)" fill="#6f6f6f" color="#6f6f6f"/><use href="#minus" transform="translate(2246.3,394.6) scale(0.95)"/><use href="#minus" transform="translate(2246.3,613.4) scale(0.95)"/><use href="#eyef" transform="translate(2292.5,643.1) scale(0.94)" fill="#bababa" color="#bababa"/><use href="#eyef" transform="translate(2292.5,675.5) scale(0.94)" fill="#6f6f6f" color="#6f6f6f"/><use href="#eyef" transform="translate(2292.5,707.9) scale(0.94)" fill="#bababa" color="#bababa"/><use href="#eyef" transform="translate(2292.5,740.3) scale(0.94)" fill="#6f6f6f" color="#6f6f6f"/><use href="#eyef" transform="translate(2292.5,772.7) scale(0.94)" fill="#bababa" color="#bababa"/><use href="#eyef" transform="translate(2292.5,805.1) scale(0.94)" fill="#bababa" color="#bababa"/><use href="#eyef" transform="translate(2292.5,838.4) scale(0.94)" fill="#bababa" color="#bababa"/><use href="#eyef" transform="translate(2292.5,869.9) scale(0.94)" fill="#bababa" color="#bababa"/><use href="#eyef" transform="translate(2292.5,903.4) scale(0.94)" fill="#bababa" color="#bababa"/><use href="#eyef" transform="translate(2292.5,934.7) scale(0.94)" fill="#bababa" color="#bababa"/><ellipse cx="2379.8" cy="1012.8" rx="15.2" ry="9.4" fill="#fff"/><path d="M2386 1019 L2394 1023.5 L2390 1016 Z" fill="#fff"/><path d="M2372 1008.5 H2376.5 L2378 1006.8 H2383.5 L2385 1008.5 H2388.5 V1018.3 H2372 Z" fill="#05609f"/><circle cx="2380.5" cy="1013.3" r="3.1" fill="#cfe4f5"/><circle cx="2380.5" cy="1013.3" r="1.4" fill="#05609f"/></g></svg>
</body>
</html>
